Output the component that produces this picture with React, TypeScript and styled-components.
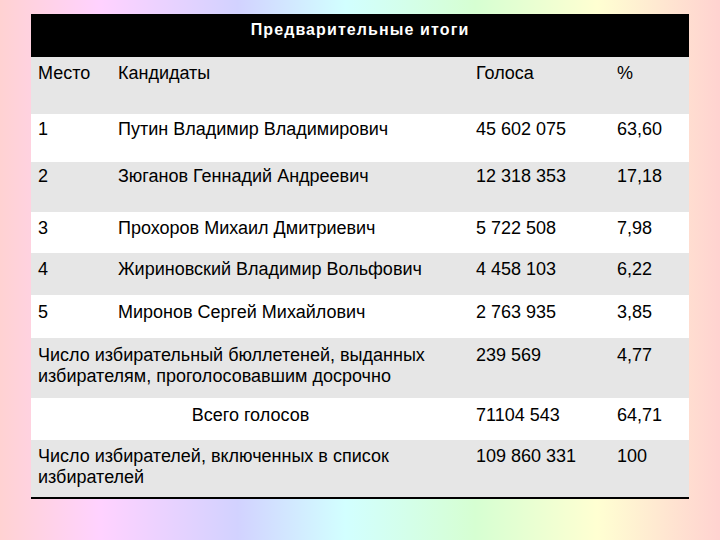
import React from 'react';
import styled, { createGlobalStyle } from 'styled-components';

const GlobalStyle = createGlobalStyle`
  html,
  body {
    margin: 0;
    padding: 0;
  }

  body {
    font-family: 'Liberation Sans', Arial, sans-serif;
  }
`;

const Slide = styled.main`
  width: 720px;
  height: 540px;
  box-sizing: border-box;
  padding: 14px 31px 0;
  background: linear-gradient(
    90deg,
    #ffd2d2 0%,
    #ffd2ff 14%,
    #d2d2ff 33%,
    #d2ffff 48%,
    #d6ffd2 66%,
    #ffffd2 83%,
    #ffd2d0 100%
  );
`;

const Table = styled.table`
  width: 658px;
  table-layout: fixed;
  border-collapse: collapse;
  border-bottom: 2px solid #000;
  color: #000;
  font-size: 18px;
  line-height: 21px;
`;

const Caption = styled.th`
  height: 37px;
  padding: 6px 0 0;
  vertical-align: top;
  background: #000;
  color: #fff;
  font-size: 16px;
  line-height: 20px;
  font-weight: bold;
  letter-spacing: 1.1px;
  text-align: center;
`;

const Row = styled.tr<{ $shaded?: boolean; $height: number }>`
  height: ${(p) => p.$height}px;
  background: ${(p) => (p.$shaded ? '#e6e6e6' : '#fff')};
`;

const Cell = styled.td<{ $center?: boolean; $top: number }>`
  padding: ${(p) => p.$top}px 6px 0 7px;
  vertical-align: top;
  font-weight: normal;
  text-align: ${(p) => (p.$center ? 'center' : 'left')};
`;

type Candidate = {
  place: string;
  name: string;
  votes: string;
  share: string;
  height: number;
  top: number;
};

const candidates: Candidate[] = [
  { place: '1', name: 'Путин Владимир Владимирович', votes: '45 602 075', share: '63,60', height: 48, top: 5 },
  { place: '2', name: 'Зюганов Геннадий Андреевич', votes: '12 318 353', share: '17,18', height: 50, top: 4 },
  { place: '3', name: 'Прохоров Михаил Дмитриевич', votes: '5 722 508', share: '7,98', height: 41, top: 6 },
  { place: '4', name: 'Жириновский Владимир Вольфович', votes: '4 458 103', share: '6,22', height: 42, top: 6 },
  { place: '5', name: 'Миронов Сергей Михайлович', votes: '2 763 935', share: '3,85', height: 43, top: 7 },
];

export default function App() {
  return (
    <>
      <GlobalStyle />
      <Slide>
        <Table>
          <colgroup>
            <col style={{ width: 80 }} />
            <col style={{ width: 358 }} />
            <col style={{ width: 141 }} />
            <col style={{ width: 79 }} />
          </colgroup>
          <thead>
            <tr>
              <Caption colSpan={4}>Предварительные итоги</Caption>
            </tr>
          </thead>
          <tbody>
            <Row $shaded $height={57}>
              <Cell $top={6}>Место</Cell>
              <Cell $top={6}>Кандидаты</Cell>
              <Cell $top={6}>Голоса</Cell>
              <Cell $top={6}>%</Cell>
            </Row>
            {candidates.map((c, i) => (
              <Row key={c.place} $shaded={i % 2 === 1} $height={c.height}>
                <Cell $top={c.top}>{c.place}</Cell>
                <Cell $top={c.top}>{c.name}</Cell>
                <Cell $top={c.top}>{c.votes}</Cell>
                <Cell $top={c.top}>{c.share}</Cell>
              </Row>
            ))}
            <Row $shaded $height={60}>
              <Cell colSpan={2} $top={7}>
                Число избирательный бюллетеней, выданных избирателям, проголосовавшим досрочно
              </Cell>
              <Cell $top={7}>239 569</Cell>
              <Cell $top={7}>4,77</Cell>
            </Row>
            <Row $height={42}>
              <Cell colSpan={2} $center $top={7}>
                Всего голосов
              </Cell>
              <Cell $top={7}>71104 543</Cell>
              <Cell $top={7}>64,71</Cell>
            </Row>
            <Row $shaded $height={58}>
              <Cell colSpan={2} $top={6}>
                Число избирателей, включенных в список избирателей
              </Cell>
              <Cell $top={6}>109 860 331</Cell>
              <Cell $top={6}>100</Cell>
            </Row>
          </tbody>
        </Table>
      </Slide>
    </>
  );
}
